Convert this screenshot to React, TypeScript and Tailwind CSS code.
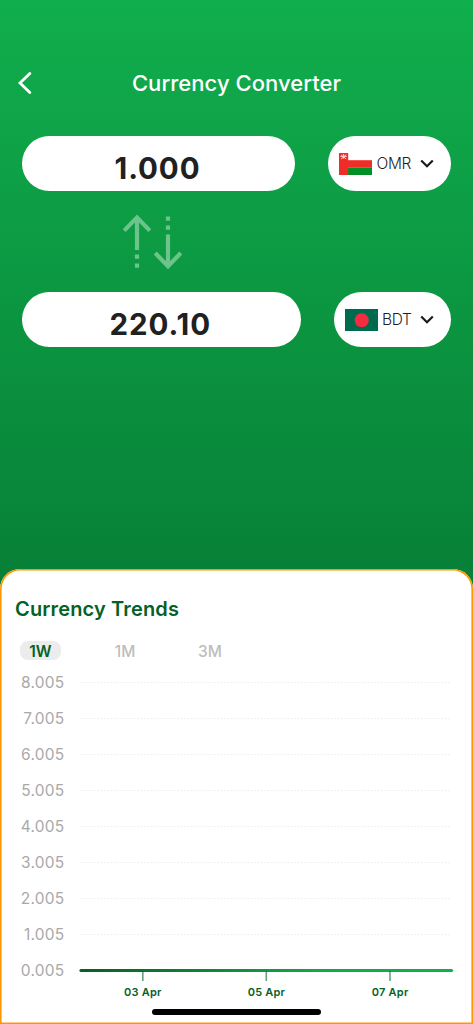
import React from "react";

const ranges = ["1W", "1M", "3M"];
const yLabels = ["8.005", "7.005", "6.005", "5.005", "4.005", "3.005", "2.005", "1.005", "0.005"];
const xLabels = ["03 Apr", "05 Apr", "07 Apr"];

function OmanFlag() {
  return (
    <svg width="33" height="22" viewBox="0 0 33 22" aria-hidden="true">
      <rect x="9" y="0" width="24" height="7.3" fill="#fff" />
      <rect x="9" y="7.2" width="24" height="7.4" fill="#ef2d28" />
      <rect x="9" y="14.5" width="24" height="7.5" fill="#009025" />
      <rect width="9.2" height="22" fill="#ef2d28" />
      {/* Crossed daggers emblem */}
      <g stroke="#fff" strokeWidth="0.9" opacity="0.85">
        <path d="M2 1.8 7.2 6M7.2 1.8 2 6M4.6 1v4.6M1.4 3.4h6.4" />
      </g>
    </svg>
  );
}

function BangladeshFlag() {
  return (
    <svg width="33" height="22" viewBox="0 0 33 22" aria-hidden="true">
      <rect width="33" height="22" fill="#006a4e" />
      <circle cx="16.7" cy="11.3" r="7" fill="#f52b42" />
    </svg>
  );
}

function ChevronDown() {
  return (
    <svg width="14" height="9" viewBox="0 0 14 9" fill="none" aria-hidden="true">
      <path d="M1.2 1.5 7 7.3 12.8 1.5" stroke="#1b1b1b" strokeWidth="2.2" />
    </svg>
  );
}

/**
 * One converter row: amount pill on the left, currency picker on the right
 */
function AmountRow({
  amount,
  code,
  flag,
  pickerClass,
}: {
  amount: string;
  code: string;
  flag: React.ReactNode;
  pickerClass: string;
}) {
  return (
    <div className="flex h-[55px] gap-[33px] pl-[22px] pr-[22.5px]">
      <div className="flex flex-1 items-center justify-center rounded-full bg-white pt-[9px] pr-[2px] text-[29.5px] font-bold tracking-[0.9px] text-[#212121]">
        {amount}
      </div>
      <button className={`flex items-center rounded-full bg-white pl-[11px] ${pickerClass}`}>
        {flag}
        <span className="ml-[4.5px] w-[36px] pt-px text-left text-[15.5px] font-light tracking-[-0.3px] text-[#1f1f1f]">
          {code}
        </span>
        <span className="ml-auto pr-[17px]">
          <ChevronDown />
        </span>
      </button>
    </div>
  );
}

function TrendChart() {
  return (
    <div className="ml-[14.5px] mt-[4px] flex">
      {/* Y axis */}
      <div className="w-[50px] pt-px text-right text-[15.5px] tracking-[0.25px] text-[#a9a9a9]">
        {yLabels.map((label) => (
          <div key={label} className="h-9 leading-9">
            {label}
          </div>
        ))}
      </div>

      <div className="ml-[14px] w-[375px]">
        <svg className="block" width="375" height="317" viewBox="0 0 375 317" aria-hidden="true">
          <defs>
            <linearGradient id="trend" gradientUnits="userSpaceOnUse" x1="0" y1="0" x2="374" y2="0">
              <stop offset="0" stopColor="#056024" />
              <stop offset="0.65" stopColor="#13a94a" />
              <stop offset="1" stopColor="#13ae4c" />
            </linearGradient>
          </defs>
          {yLabels.slice(0, -1).map((label, i) => (
            <line
              key={label}
              x1="1.5"
              x2="372"
              y1={18.6 + i * 36}
              y2={18.6 + i * 36}
              stroke="#ededed"
              strokeDasharray="1.67 1.67"
            />
          ))}
          <line x1="2" x2="372.5" y1="306.5" y2="306.5" stroke="url(#trend)" strokeWidth="3.2" strokeLinecap="round" />
          {[63.8, 187.3, 311].map((x) => (
            <line key={x} x1={x} x2={x} y1="307" y2="317" stroke="#056125" strokeOpacity="0.6" strokeWidth="1.6" />
          ))}
        </svg>
        {/* X axis */}
        <div className="grid grid-cols-3 pl-[2.5px] pr-[1.5px] pt-[3px] text-center text-[11px] font-semibold leading-4 tracking-[0.2px] text-[#056125]">
          {xLabels.map((label) => (
            <div key={label}>{label}</div>
          ))}
        </div>
      </div>
    </div>
  );
}

export default function App() {
  return (
    <div className="flex h-[1024px] w-[473px] flex-col overflow-hidden bg-[linear-gradient(#11ae4d_0px,#078137_569px)] font-['Inter',sans-serif]">
      <header className="mt-[63px] flex h-10 items-center">
        <button className="w-[60px] pl-[18px]" aria-label="Back">
          <svg width="14" height="24" viewBox="0 0 14 24" fill="none" aria-hidden="true">
            <path d="M11.8 2.5 2 12l9.8 9.5" stroke="#fff" strokeWidth="2.8" strokeLinecap="round" />
          </svg>
        </button>
        <h1 className="flex-1 pr-[60px] text-center text-[22px] font-medium tracking-[0.05px] text-white">
          Currency Converter
        </h1>
      </header>

      <main className="mt-[33px] flex-1">
        <AmountRow amount="1.000" code="OMR" flag={<OmanFlag />} pickerClass="w-[122.5px]" />

        {/* Swap direction */}
        <button className="ml-[121px] flex h-[101px] items-center" aria-label="Swap currencies">
          <svg width="64" height="56" viewBox="0 0 64 56" fill="none" aria-hidden="true">
            <g stroke="#6cc48b" strokeWidth="4.2">
              <path d="M3.2 16.6 16 3.4 28.8 16.6M16 4v32" />
              <path d="M16 40.5v4.3M16 49.5v4.3" />
              <path d="M34.2 39 47 52.2 59.8 39M47 52V20.5" />
              <path d="M47 2.5v4.3M47 11.5v4.3" />
            </g>
          </svg>
        </button>

        <AmountRow amount="220.10" code="BDT" flag={<BangladeshFlag />} pickerClass="w-[117px]" />
      </main>

      {/* Trends sheet */}
      <section className="relative flex h-[455px] flex-col rounded-t-[20px] bg-white shadow-[inset_0_0_0_1.6px_#ff9800]">
        <h2 className="ml-[15px] mt-[26px] text-[20px] font-semibold leading-7 tracking-[0.15px] text-[#056125]">
          Currency Trends
        </h2>
        <div className="ml-[20px] mt-[18px] flex h-[19px] items-center gap-[44px] text-[15.5px] text-[#bdbdbd]">
          {ranges.map((range, i) => (
            <button
              key={range}
              className={
                i === 0
                  ? "h-[19px] w-[41px] rounded-[8px] bg-[#ececec] font-semibold leading-[21px] text-[#056125]"
                  : "h-[19px] w-[41px] pr-[1px] font-medium leading-[21px]"
              }
            >
              {range}
            </button>
          ))}
        </div>
        <TrendChart />
        {/* Home indicator */}
        <div className="absolute bottom-[9px] left-[152px] h-[6px] w-[169px] rounded-full bg-black" />
      </section>
    </div>
  );
}
